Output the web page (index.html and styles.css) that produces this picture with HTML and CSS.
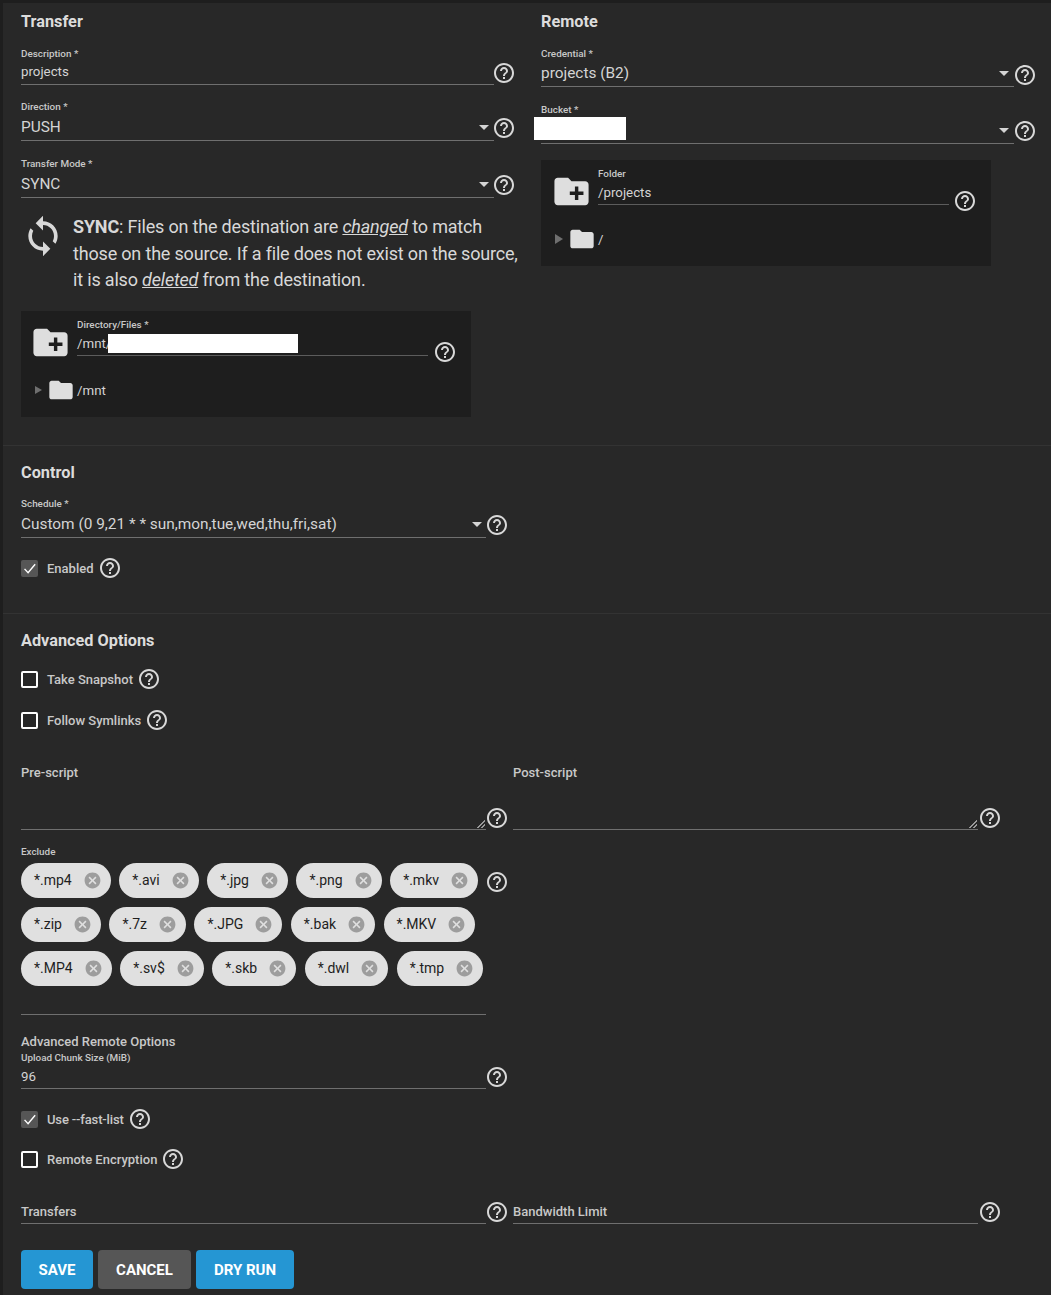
FILE: index.html
```html
<!DOCTYPE html>
<html lang="en">

<head>
  <meta charset="UTF-8" />
  <title>Cloud Sync Task</title>
  <link rel="stylesheet" href="styles.css">
</head>

<body>
  <svg class="defs" width="0" height="0">
    <symbol id="help" viewBox="0 0 24 24"><path d="M11 18h2v-2h-2v2zm1-16C6.48 2 2 6.48 2 12s4.48 10 10 10 10-4.48 10-10S17.52 2 12 2zm0 18c-4.41 0-8-3.59-8-8s3.59-8 8-8 8 3.59 8 8-3.59 8-8 8zm0-14c-2.21 0-4 1.79-4 4h2c0-1.1.9-2 2-2s2 .9 2 2c0 2-3 1.75-3 5h2c0-2.25 3-2.5 3-5 0-2.21-1.79-4-4-4z"/></symbol>
    <symbol id="sync" viewBox="0 0 24 24"><path d="M12 4V1L8 5l4 4V6c3.31 0 6 2.69 6 6 0 1.01-.25 1.97-.7 2.8l1.46 1.46C19.54 15.03 20 13.57 20 12c0-4.42-3.58-8-8-8zm0 14c-3.31 0-6-2.69-6-6 0-1.01.25-1.97.7-2.8L5.24 7.74C4.46 8.97 4 10.43 4 12c0 4.42 3.58 8 8 8v3l4-4-4-4v3z"/></symbol>
    <symbol id="folder-new" viewBox="0 0 24 24"><path d="M20 6h-8l-2-2H4c-1.11 0-1.99.89-1.99 2L2 18c0 1.11.89 2 2 2h16c1.11 0 2-.89 2-2V8c0-1.11-.89-2-2-2zm-1 8h-3v3h-2v-3h-3v-2h3V9h2v3h3v2z"/></symbol>
    <symbol id="folder" viewBox="0 0 24 24"><path d="M10 4H4c-1.1 0-1.99.9-1.99 2L2 18c0 1.1.9 2 2 2h16c1.1 0 2-.9 2-2V8c0-1.1-.9-2-2-2h-8l-2-2z"/></symbol>
    <symbol id="cancel" viewBox="0 0 24 24"><path d="M12 2C6.47 2 2 6.47 2 12s4.47 10 10 10 10-4.47 10-10S17.53 2 12 2zm5 13.59L15.59 17 12 13.41 8.41 17 7 15.59 10.59 12 7 8.41 8.41 7 12 10.59 15.59 7 17 8.41 13.41 12 17 15.59z"/></symbol>
    <symbol id="check" viewBox="0 0 24 24"><path d="M5 12.5l5 5.5L20 6" fill="none" stroke="currentColor" stroke-width="2"/></symbol>
  </svg>

  <main class="page">
    <section class="top">
      <div class="col-left">
        <h2 class="title">Transfer</h2>
        <div class="row row-desc">
          <div class="field">
            <label>Description *</label>
            <div class="value">projects</div>
          </div>
          <svg class="help"><use href="#help" /></svg>
        </div>
        <div class="row row-direction low-help">
          <div class="field">
            <label>Direction *</label>
            <div class="value large select">PUSH<i class="caret"></i></div>
          </div>
          <svg class="help"><use href="#help" /></svg>
        </div>
        <div class="row row-mode low-help">
          <div class="field">
            <label>Transfer Mode *</label>
            <div class="value large select">SYNC<i class="caret"></i></div>
          </div>
          <svg class="help"><use href="#help" /></svg>
        </div>
        <div class="sync-note">
          <svg class="sync-icon"><use href="#sync" /></svg>
          <p><b>SYNC</b>: Files on the destination are <em>changed</em> to match those on the source. If a file does not exist on the source, it is also <em>deleted</em> from the destination.</p>
        </div>
        <div class="explorer">
          <div class="explorer-head">
            <svg class="folder-new"><use href="#folder-new" /></svg>
            <div class="field">
              <label>Directory/Files *</label>
              <div class="value path">/mnt/<span class="redacted"></span></div>
            </div>
            <svg class="help"><use href="#help" /></svg>
          </div>
          <div class="tree">
            <i class="tree-arrow"></i>
            <svg class="folder"><use href="#folder" /></svg>
            <span>/mnt</span>
          </div>
        </div>
      </div>

      <div class="col-right">
        <h2 class="title">Remote</h2>
        <div class="row row-cred">
          <div class="field">
            <label>Credential *</label>
            <div class="value large select cred">projects (B2)<i class="caret"></i></div>
          </div>
          <svg class="help"><use href="#help" /></svg>
        </div>
        <div class="row row-bucket low-help">
          <div class="field">
            <label>Bucket *</label>
            <div class="value large select"><span class="redacted-bucket"></span><i class="caret"></i></div>
          </div>
          <svg class="help"><use href="#help" /></svg>
        </div>
        <div class="explorer explorer-remote">
          <div class="explorer-head">
            <svg class="folder-new"><use href="#folder-new" /></svg>
            <div class="field">
              <label>Folder</label>
              <div class="value path">/projects</div>
            </div>
            <svg class="help"><use href="#help" /></svg>
          </div>
          <div class="tree">
            <i class="tree-arrow"></i>
            <svg class="folder"><use href="#folder" /></svg>
            <span>/</span>
          </div>
        </div>
      </div>
    </section>

    <section class="block control">
      <h2 class="title">Control</h2>
      <div class="row row-half row-schedule low-help">
        <div class="field">
          <label>Schedule *</label>
          <div class="value large select">Custom (0 9,21 * * sun,mon,tue,wed,thu,fri,sat)<i class="caret"></i></div>
        </div>
        <svg class="help"><use href="#help" /></svg>
      </div>
      <div class="check check-enabled">
        <span class="box checked"><svg><use href="#check" /></svg></span>
        <span>Enabled</span>
        <svg class="help"><use href="#help" /></svg>
      </div>
    </section>

    <section class="block advanced">
      <h2 class="title">Advanced Options</h2>
      <div class="check check-snapshot">
        <span class="box"></span>
        <span>Take Snapshot</span>
        <svg class="help"><use href="#help" /></svg>
      </div>
      <div class="check check-symlinks">
        <span class="box"></span>
        <span>Follow Symlinks</span>
        <svg class="help"><use href="#help" /></svg>
      </div>

      <div class="pair scripts">
        <div class="row">
          <div class="field area">
            <div class="plain-label">Pre-script</div>
            <i class="grip"></i>
          </div>
          <svg class="help"><use href="#help" /></svg>
        </div>
        <div class="row">
          <div class="field area">
            <div class="plain-label">Post-script</div>
            <i class="grip"></i>
          </div>
          <svg class="help"><use href="#help" /></svg>
        </div>
      </div>

      <div class="row row-half row-exclude">
        <div class="field chips-field">
          <label>Exclude</label>
          <div class="chips">
            <span class="chip">*.mp4<svg><use href="#cancel" /></svg></span>
            <span class="chip">*.avi<svg><use href="#cancel" /></svg></span>
            <span class="chip">*.jpg<svg><use href="#cancel" /></svg></span>
            <span class="chip">*.png<svg><use href="#cancel" /></svg></span>
            <span class="chip">*.mkv<svg><use href="#cancel" /></svg></span>
            <span class="chip">*.zip<svg><use href="#cancel" /></svg></span>
            <span class="chip">*.7z<svg><use href="#cancel" /></svg></span>
            <span class="chip">*.JPG<svg><use href="#cancel" /></svg></span>
            <span class="chip">*.bak<svg><use href="#cancel" /></svg></span>
            <span class="chip">*.MKV<svg><use href="#cancel" /></svg></span>
            <span class="chip">*.MP4<svg><use href="#cancel" /></svg></span>
            <span class="chip">*.sv$<svg><use href="#cancel" /></svg></span>
            <span class="chip">*.skb<svg><use href="#cancel" /></svg></span>
            <span class="chip">*.dwl<svg><use href="#cancel" /></svg></span>
            <span class="chip">*.tmp<svg><use href="#cancel" /></svg></span>
          </div>
        </div>
        <svg class="help"><use href="#help" /></svg>
      </div>

      <div class="sub-title">Advanced Remote Options</div>
      <div class="row row-half">
        <div class="field">
          <label>Upload Chunk Size (MiB)</label>
          <div class="value chunk">96</div>
        </div>
        <svg class="help"><use href="#help" /></svg>
      </div>
      <div class="check check-fastlist">
        <span class="box checked"><svg><use href="#check" /></svg></span>
        <span>Use --fast-list</span>
        <svg class="help"><use href="#help" /></svg>
      </div>
      <div class="check check-encrypt">
        <span class="box"></span>
        <span>Remote Encryption</span>
        <svg class="help"><use href="#help" /></svg>
      </div>

      <div class="pair limits">
        <div class="row">
          <div class="field">
            <div class="plain-label">Transfers</div>
          </div>
          <svg class="help"><use href="#help" /></svg>
        </div>
        <div class="row">
          <div class="field">
            <div class="plain-label">Bandwidth Limit</div>
          </div>
          <svg class="help"><use href="#help" /></svg>
        </div>
      </div>

      <div class="actions">
        <button class="btn primary btn-save">SAVE</button>
        <button class="btn btn-cancel">CANCEL</button>
        <button class="btn primary btn-dry">DRY RUN</button>
      </div>
    </section>
  </main>
</body>

</html>
```

FILE: styles.css
```css
* {
  box-sizing: border-box;
}

html,
body {
  margin: 0;
  padding: 0;
}

body {
  height: 1295px;
  overflow: hidden;
  background-color: #1e1e1e;
  font-family: Roboto, "Liberation Sans", sans-serif;
  color: #d4d4d4;
}

.defs {
  position: absolute;
}

.page {
  margin: 3px 0 0 3px;
  height: 1292px;
  background-color: #282828;
}

.top {
  display: grid;
  grid-template-columns: 517px 1fr;
  height: 443px;
  border-bottom: 1px solid #333333;
}

.col-left {
  padding: 9px 0 0 18px;
}

.col-right {
  padding: 9px 0 0 21px;
}

.title {
  margin: 0;
  height: 20px;
  font-size: 16.3px;
  line-height: 20px;
  font-weight: 700;
  color: #dcdcdc;
}

.row {
  display: flex;
  align-items: flex-end;
}

.field {
  flex: none;
  width: 465px;
  border-bottom: 1px solid #6f6f6f;
}

label {
  display: block;
  height: 12px;
  font-size: 9.9px;
  line-height: 12px;
  font-weight: 500;
  color: #c8c8c8;
}

.value {
  position: relative;
  height: 24px;
  font-size: 13.3px;
  line-height: 24px;
  color: #d4d4d4;
}

.value.large {
  height: 27px;
  font-size: 15.4px;
  line-height: 28px;
}

.value.cred {
  height: 26px;
  line-height: 26px;
}

.caret {
  position: absolute;
  right: 5px;
  top: 12px;
  border-left: 5px solid transparent;
  border-right: 5px solid transparent;
  border-top: 5px solid #d4d4d4;
}

.cred .caret {
  top: 11px;
}

.row-schedule .caret {
  right: 4px;
}

.help {
  flex: none;
  width: 24px;
  height: 24px;
  fill: #d8d8d8;
}

.low-help > .help {
  margin-bottom: 1px;
}

/* transfer column */
.col-left .row .field {
  width: 473px;
}

.col-left .row > .help {
  margin-left: -2px;
}

.row-desc,
.row-direction {
  margin-top: 16px;
}

.row-mode {
  margin-top: 17px;
}

.sync-note {
  display: flex;
  margin-top: 16px;
  width: 500px;
}

.sync-note p {
  margin: 0;
  font-size: 18px;
  line-height: 26.5px;
  letter-spacing: -0.18px;
  color: #d8d8d8;
}

.sync-note b {
  font-weight: 700;
}

.sync-note em {
  text-decoration: underline;
}

.sync-icon {
  flex: none;
  width: 44px;
  height: 44px;
  margin-right: 8px;
  fill: #d8d8d8;
}

.explorer {
  width: 450px;
  height: 106px;
  margin-top: 17.5px;
  padding: 8px 14px 0 9px;
  background-color: #1e1e1e;
}

.explorer-head {
  display: flex;
  align-items: flex-end;
}

.explorer-head .field {
  flex: 1;
  min-width: 0;
  border-bottom-color: #5c5c5c;
}

.explorer-head .help {
  margin: 0 0 -8px 5px;
}

.folder-new {
  flex: none;
  width: 41px;
  height: 41px;
  margin: 0 6px -7px 0;
  fill: #dedede;
}

.value.path {
  line-height: 26px;
}

.redacted {
  display: inline-block;
  width: 190px;
  height: 19px;
  margin: 3px 0 0 -3px;
  background-color: #ffffff;
  vertical-align: top;
}

.redacted-bucket {
  position: absolute;
  left: -7px;
  top: 1px;
  width: 92px;
  height: 23px;
  background-color: #ffffff;
}

.tree {
  display: flex;
  align-items: center;
  margin: 20px 0 0 5px;
  font-size: 13.3px;
  color: #d4d4d4;
}

.tree-arrow {
  border-top: 4px solid transparent;
  border-bottom: 4px solid transparent;
  border-left: 7px solid #6f6f6f;
  margin-right: 5px;
}

.folder {
  flex: none;
  width: 28px;
  height: 28px;
  margin-right: 2px;
  fill: #dedede;
}

/* remote column */
.col-right .row .field {
  width: 473px;
}

.col-right .row > .help {
  margin-left: -1px;
}

.row-cred {
  margin-top: 16px;
}

.row-bucket {
  margin-top: 17px;
}

.explorer-remote {
  margin-top: 16px;
  padding-left: 10px;
}

.explorer-remote .explorer-head .help {
  margin-left: 4px;
}

.explorer-remote .tree {
  margin-left: 4px;
}

.explorer-remote .tree-arrow {
  border-top-width: 5px;
  border-bottom-width: 5px;
  border-left-width: 8px;
  margin-right: 5px;
}

.explorer-remote .folder {
  margin-right: 2px;
}

/* lower blocks */
.block {
  padding-left: 18px;
}

.control {
  height: 168px;
  padding-top: 17px;
  border-bottom: 1px solid #333333;
}

.row-half {
  width: 489px;
}

.row-half > .help,
.pair .row:first-child > .help {
  margin-left: -1px;
}

.row-schedule {
  margin-top: 15px;
}

.check {
  display: flex;
  align-items: center;
  height: 24px;
  font-size: 13px;
  font-weight: 500;
  color: #c8c8c8;
}

.check .help {
  margin-left: 4px;
}

.box {
  flex: none;
  width: 17px;
  height: 17px;
  margin-right: 9px;
  border: 2px solid #ffffff;
  border-radius: 2px;
}

.box.checked {
  border: none;
  background-color: #565656;
  color: #ffffff;
}

.box svg {
  display: block;
  width: 17px;
  height: 17px;
}

.check-enabled {
  margin-top: 18px;
}

.advanced {
  padding-top: 17px;
}

.check-snapshot {
  margin-top: 16px;
}

.check-symlinks {
  margin-top: 17px;
}

.pair {
  display: grid;
  grid-template-columns: 489px 489px;
  gap: 3px;
  width: 981px;
}

.scripts {
  margin-top: 32px;
}

.plain-label {
  height: 21px;
  font-size: 13px;
  line-height: 18px;
  font-weight: 500;
  color: #c8c8c8;
}

.limits .plain-label {
  line-height: 20px;
}

.area {
  position: relative;
  height: 66px;
}

.grip {
  position: absolute;
  right: 1px;
  bottom: 1px;
  width: 8px;
  height: 8px;
  background: linear-gradient(135deg, transparent 50%, #9a9a9a 50%, #9a9a9a 60%, transparent 60%, transparent 75%, #9a9a9a 75%, #9a9a9a 85%, transparent 85%);
}

.row-exclude {
  align-items: flex-start;
  margin-top: 16px;
}

.row-exclude > .help {
  margin-top: 24px;
}

.chips-field {
  height: 169px;
}

.chips {
  display: flex;
  flex-wrap: wrap;
  gap: 9px 8.5px;
  margin-top: 5px;
}

.chip {
  display: inline-flex;
  align-items: center;
  height: 35px;
  padding: 0 9px 1px 13px;
  border-radius: 18px;
  background-color: #e0e0e0;
  font-size: 14px;
  color: #1e1e1e;
}

.chip svg {
  width: 19px;
  height: 19px;
  margin-left: 11px;
  fill: #9d9d9d;
}

.sub-title {
  margin-top: 19px;
  height: 18px;
  font-size: 13px;
  line-height: 16px;
  font-weight: 500;
  color: #c8c8c8;
}

.value.chunk {
  height: 24px;
  line-height: 26px;
}

.check-fastlist {
  margin-top: 18px;
  letter-spacing: -0.15px;
}

.check-encrypt {
  margin-top: 16px;
}

.limits {
  margin-top: 29px;
}

.actions {
  display: flex;
  gap: 5px;
  margin-top: 26px;
}

.btn {
  height: 39px;
  padding: 0;
  border: none;
  border-radius: 4px;
  font-family: Roboto, "Liberation Sans", sans-serif;
  font-size: 15px;
  font-weight: 700;
  color: #ffffff;
  background-color: #565656;
}

.btn.primary {
  background-color: #2596d3;
}

.btn-save {
  width: 72px;
}

.btn-cancel {
  width: 93px;
}

.btn-dry {
  width: 98px;
}
```
